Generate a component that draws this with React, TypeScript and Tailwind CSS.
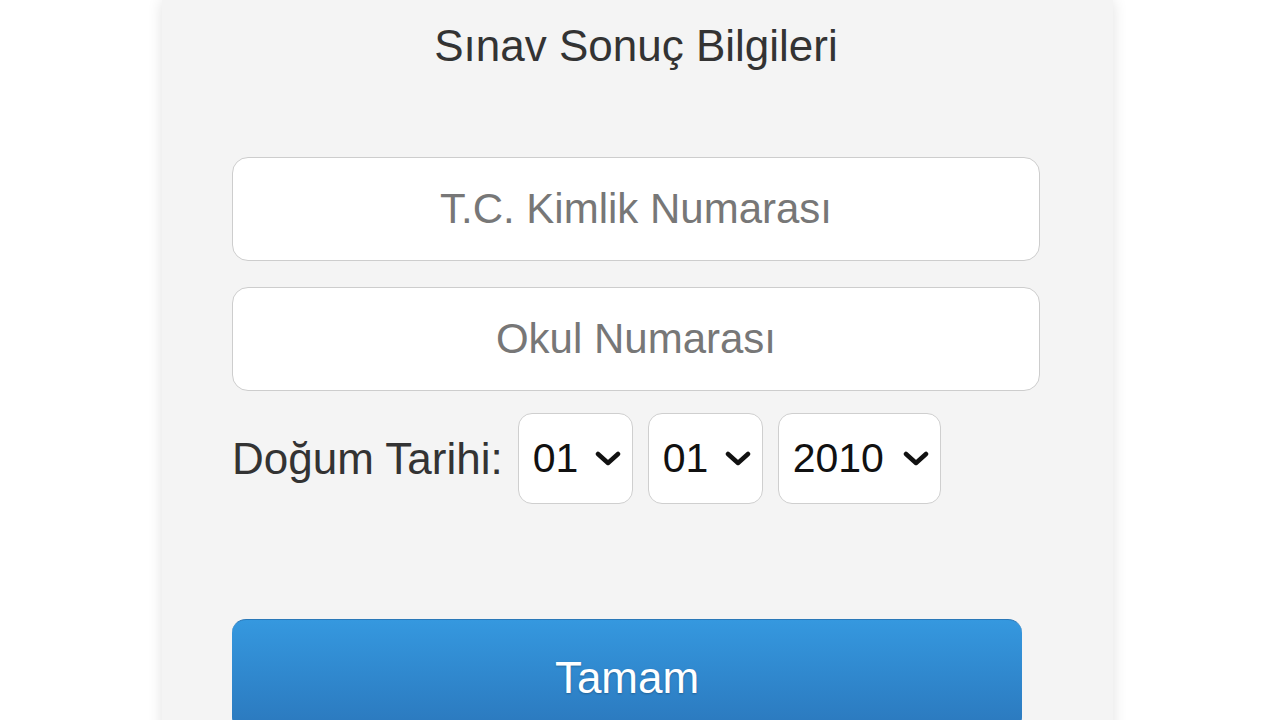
import React, { useState } from 'react';

const font = { fontFamily: '"Liberation Sans", Arial, sans-serif' };

const Chevron = () => (
  <svg width="28" height="16" viewBox="0 0 28 16" className="pointer-events-none">
    <polyline points="4,3 14,12 24,3" fill="none" stroke="#111" strokeWidth="4.5" strokeLinecap="round" strokeLinejoin="round" />
  </svg>
);

const DateSelect = ({
  value,
  options,
  width,
  onChange,
}: {
  value: string;
  options: string[];
  width: string;
  onChange: (v: string) => void;
}) => (
  <div className={`relative h-[91px] ${width}`}>
    <select
      value={value}
      onChange={(e) => onChange(e.target.value)}
      className="h-full w-full appearance-none rounded-[14px] border border-[#cfcfcf] bg-white pl-[14px] text-[41px] text-[#111] outline-none"
    >
      {options.map((o) => (
        <option key={o} value={o}>
          {o}
        </option>
      ))}
    </select>
    <div className="pointer-events-none absolute right-[11px] top-1/2 -translate-y-1/2">
      <Chevron />
    </div>
  </div>
);

const pad = (n: number) => String(n).padStart(2, '0');

export default function App() {
  const [day, setDay] = useState('01');
  const [month, setMonth] = useState('01');
  const [year, setYear] = useState('2010');

  const days = Array.from({ length: 31 }, (_, i) => pad(i + 1));
  const months = Array.from({ length: 12 }, (_, i) => pad(i + 1));
  const years = Array.from({ length: 15 }, (_, i) => String(2005 + i));

  return (
    <div className="h-[720px] overflow-hidden bg-white" style={font}>
      <div className="ml-[162px] h-[760px] w-[951px] bg-[#f4f4f4] pl-[70px] pr-[73px] shadow-[0_0_14px_rgba(0,0,0,0.12)]">
        {/* Title */}
        <h1 className="pt-[24px] text-center text-[44px] leading-none text-[#333]">Sınav Sonuç Bilgileri</h1>

        {/* Inputs */}
        <div className="mt-[89px] flex flex-col gap-[26px]">
          <input
            placeholder="T.C. Kimlik Numarası"
            className="h-[104px] w-full rounded-[16px] border border-[#cdcdcd] bg-white text-center text-[42px] text-[#333] outline-none placeholder:text-[#777]"
          />
          <input
            placeholder="Okul Numarası"
            className="h-[104px] w-full rounded-[16px] border border-[#cdcdcd] bg-white text-center text-[42px] text-[#333] outline-none placeholder:text-[#777]"
          />
        </div>

        {/* Birth date */}
        <div className="mt-[22px] flex items-center gap-[15px]">
          <span className="text-[44px] text-[#333]">Doğum Tarihi:</span>
          <div className="flex gap-[15px]">
            <DateSelect value={day} options={days} width="w-[115px]" onChange={setDay} />
            <DateSelect value={month} options={months} width="w-[115px]" onChange={setMonth} />
            <DateSelect value={year} options={years} width="w-[163px]" onChange={setYear} />
          </div>
        </div>

        {/* Submit */}
        <button
          type="button"
          className="mt-[115px] flex h-[112px] w-[790px] items-start justify-center rounded-[14px] border-t border-[#2a78b8] bg-gradient-to-b from-[#3598df] to-[#2b78bd] pt-[36px] text-[44px] leading-none text-white [text-shadow:0_1px_2px_rgba(0,0,0,0.25)]"
        >
          Tamam
        </button>
      </div>
    </div>
  );
}
